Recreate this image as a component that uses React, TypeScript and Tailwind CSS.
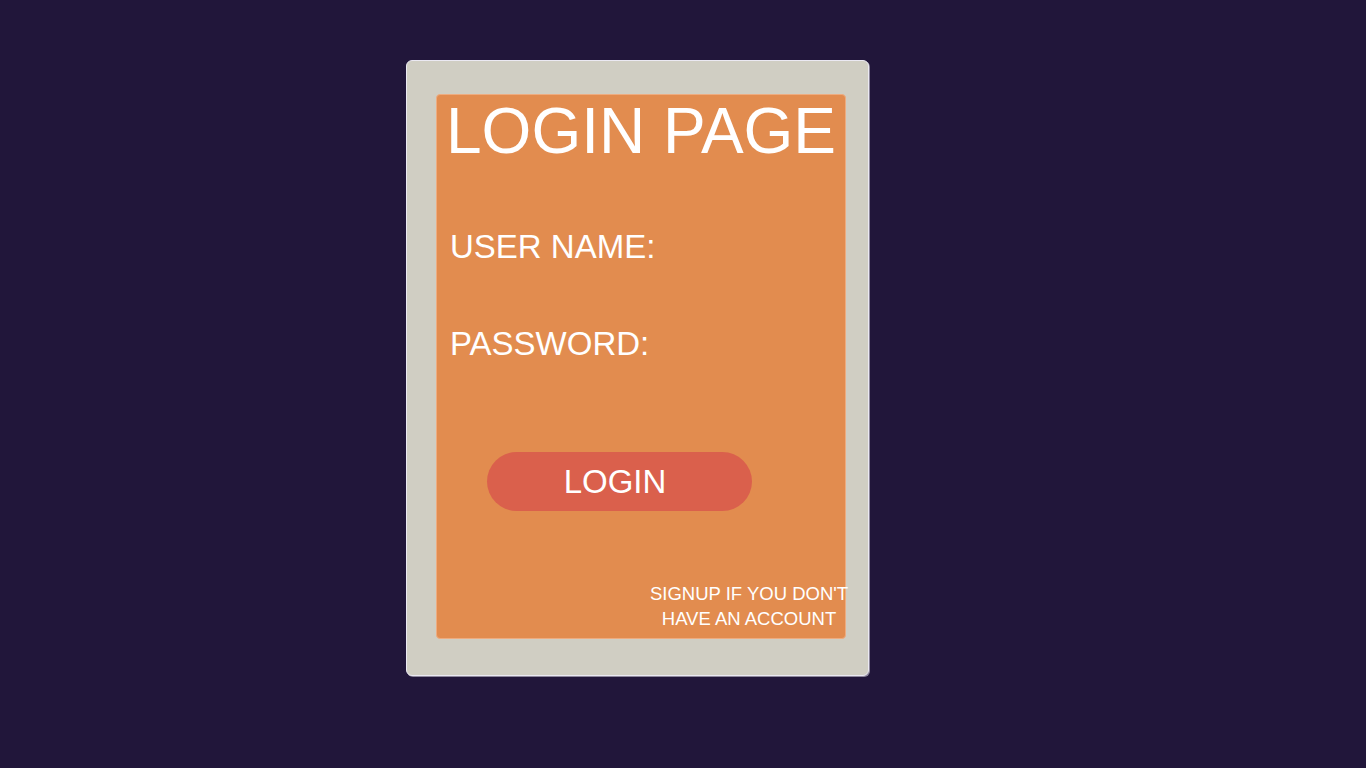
import React from 'react';

const font = { fontFamily: '"Liberation Sans", Arial, sans-serif' };

const App: React.FC = () => {
  return (
    <div className="w-full h-[768px] bg-[#21163a] overflow-hidden" style={font}>
      <div className="ml-[406px] pt-[60px]">
        {/* outer card */}
        <div className="w-[463px] h-[616px] bg-[#d0cec3] rounded-[6px] border border-[#ebe9f2] shadow-[1px_1px_0_#8d879c] pt-[33px] pl-[29px]">
          {/* orange panel */}
          <div className="w-[410px] h-[545px] bg-[#e28c4f] rounded-[4px] border border-[#eeac80] flex flex-col text-white">
            <h1 className="text-[64px] leading-none pt-[4px] pl-[9px] whitespace-nowrap">LOGIN PAGE</h1>

            <label className="text-[33px] leading-none mt-[67px] pl-[13px]">USER NAME:</label>
            <label className="text-[33px] leading-none mt-[64px] pl-[13px]">PASSWORD:</label>

            <button className="mt-[92px] ml-[50px] w-[265px] h-[59px] rounded-full bg-[#da604c] text-[33px] leading-none text-white flex items-center justify-center pr-[9px]">
              LOGIN
            </button>

            <div className="mt-[70px] ml-[206px] w-[212px] text-center text-[18.5px] leading-[25px] whitespace-nowrap">
              <div>SIGNUP IF YOU DON'T</div>
              <div>HAVE AN ACCOUNT</div>
            </div>
          </div>
        </div>
      </div>
    </div>
  );
};

export default App;
